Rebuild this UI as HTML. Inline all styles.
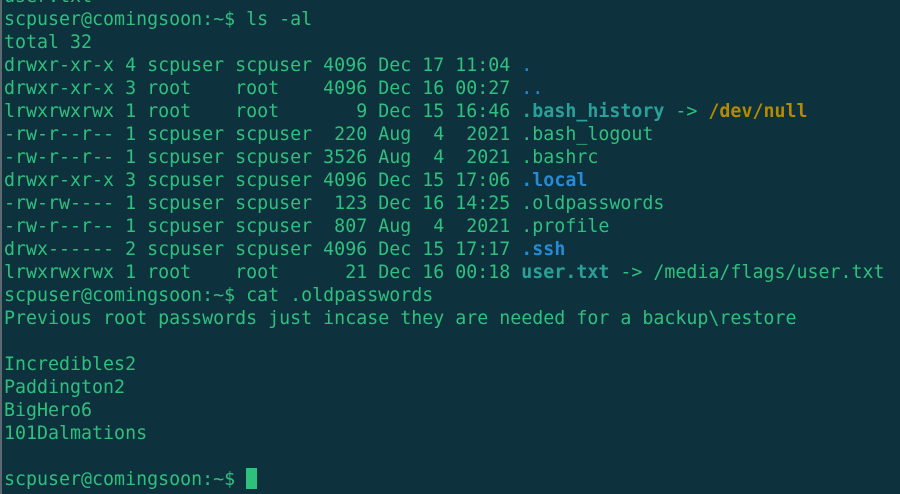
<!DOCTYPE html>
<html><head><meta charset="utf-8"><style>
html,body{margin:0;padding:0;width:900px;height:494px;overflow:hidden;background:#0d313d;}
.strip{position:absolute;left:0;top:0;width:2px;height:494px;background:#5a6a70;}
pre{position:absolute;left:4px;top:-15px;margin:0;font-family:"DejaVu Sans Mono","Liberation Mono",monospace;font-size:18.3px;line-height:23px;color:#2fc07d;white-space:pre;}
.b{color:#268bd2;font-weight:bold}
.bl{color:#268bd2}
.c{color:#2aa198;font-weight:bold}
.y{color:#b58900;font-weight:bold}
.cur{display:inline-block;width:11px;height:21px;background:#2fc07d;vertical-align:-4px;}
</style></head><body><div class="strip"></div><pre>user.txt
scpuser@comingsoon:~$ ls -al
total 32
drwxr-xr-x 4 scpuser scpuser 4096 Dec 17 11:04 <span class="bl">.</span>
drwxr-xr-x 3 root    root    4096 Dec 16 00:27 <span class="bl">..</span>
lrwxrwxrwx 1 root    root       9 Dec 15 16:46 <span class="c">.bash_history</span> -&gt; <span class="y">/dev/null</span>
-rw-r--r-- 1 scpuser scpuser  220 Aug  4  2021 .bash_logout
-rw-r--r-- 1 scpuser scpuser 3526 Aug  4  2021 .bashrc
drwxr-xr-x 3 scpuser scpuser 4096 Dec 15 17:06 <span class="b">.local</span>
-rw-rw---- 1 scpuser scpuser  123 Dec 16 14:25 .oldpasswords
-rw-r--r-- 1 scpuser scpuser  807 Aug  4  2021 .profile
drwx------ 2 scpuser scpuser 4096 Dec 15 17:17 <span class="b">.ssh</span>
lrwxrwxrwx 1 root    root      21 Dec 16 00:18 <span class="c">user.txt</span> -&gt; /media/flags/user.txt
scpuser@comingsoon:~$ cat .oldpasswords
Previous root passwords just incase they are needed for a backup\restore

Incredibles2
Paddington2
BigHero6
101Dalmations

scpuser@comingsoon:~$ <span class="cur"></span></pre></body></html>
